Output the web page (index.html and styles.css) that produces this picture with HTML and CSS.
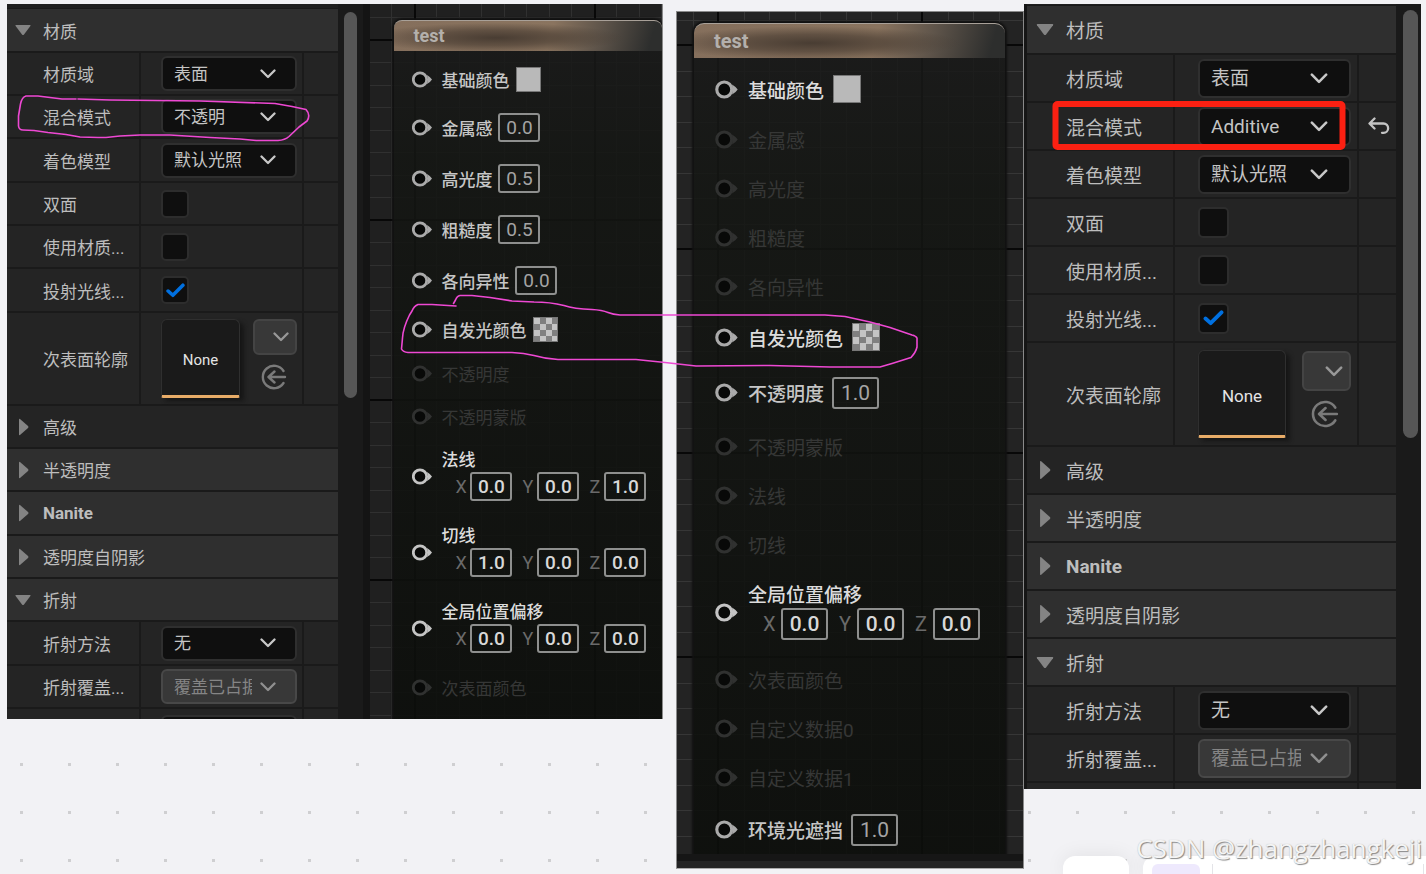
FILE: index.html
```html
<!DOCTYPE html>
<html lang="zh-CN">
<head>
<meta charset="utf-8">
<title>材质混合模式对比</title>
<link rel="stylesheet" href="styles.css">
</head>
<body>
<svg class="sprite" aria-hidden="true">
  <symbol id="down" viewBox="0 0 16 12"><path d="M1 1h14q1 0 .4 1L9 10.500q-1 1-2 0L.6 2Q0 1 1 1z" fill="#848484"/></symbol>
  <symbol id="right" viewBox="0 0 11 18"><path d="M1 1.500Q1 .5 2 1l8 7q1 1 0 2l-8 7q-1 .5-1-.5z" fill="#848484"/></symbol>
  <symbol id="chev" viewBox="0 0 16 10"><path d="M1.500 1.500 8 8l6.500-6.500" fill="none" stroke="currentColor" stroke-width="2.300" stroke-linecap="round" stroke-linejoin="round"/></symbol>
  <symbol id="tick" viewBox="0 0 18 14"><path d="M2 7.500 6.500 11.500 16 2" fill="none" stroke="#0070e0" stroke-width="3.400" stroke-linecap="round" stroke-linejoin="round"/></symbol>
  <symbol id="use" viewBox="0 0 26 26"><path d="M22.500 7a11.200 11.200 0 1 0 0 12M24 13H8M13.500 7.500 7.500 13l6 5.500" fill="none" stroke="#7a7a7a" stroke-width="2.400" stroke-linecap="round" stroke-linejoin="round"/></symbol>
  <symbol id="reset" viewBox="0 0 22 18"><path d="M6.500 1.500 1.500 6.500l5 5M2 6.500h13.500a4.600 4.600 0 0 1 0 9.300H14" fill="none" stroke="#c4c4c4" stroke-width="2.300" stroke-linecap="round" stroke-linejoin="round"/></symbol>
  <symbol id="pin" viewBox="0 0 20 17"><circle cx="8" cy="8.500" r="6.700" fill="#080908" stroke="currentColor" stroke-width="2.800"/><path d="M15 4q4 2.500 5 4.500-1 2-5 4.500 1.500-4.500 0-9z" fill="currentColor"/></symbol>
</svg>
<main class="board">
  <section class="shot shot-wide">
    <div class="details">
      <div class="rows">
        <button class="cat"><svg class="down"><use href="#down"/></svg>材质</button>
        <div class="row"><label for="a1">材质域</label><div class="val"><span class="combo"><select id="a1"><option>表面</option></select><svg><use href="#chev"/></svg></span></div><div></div></div>
        <div class="row"><label for="a2">混合模式</label><div class="val"><span class="combo"><select id="a2"><option>不透明</option></select><svg><use href="#chev"/></svg></span></div><div></div></div>
        <div class="row"><label for="a3">着色模型</label><div class="val"><span class="combo"><select id="a3"><option>默认光照</option></select><svg><use href="#chev"/></svg></span></div><div></div></div>
        <div class="row"><label for="a4">双面</label><div class="val"><span class="check"><input type="checkbox" id="a4"><svg><use href="#tick"/></svg></span></div><div></div></div>
        <div class="row"><label for="a5">使用材质...</label><div class="val"><span class="check"><input type="checkbox" id="a5"><svg><use href="#tick"/></svg></span></div><div></div></div>
        <div class="row"><label for="a6">投射光线...</label><div class="val"><span class="check"><input type="checkbox" id="a6" checked><svg><use href="#tick"/></svg></span></div><div></div></div>
        <div class="row"><label for="a7">次表面轮廓</label><div class="val asset"><button class="thumb" id="a7">None</button><div class="tools"><button class="pick" aria-label="选择资产"><svg><use href="#chev"/></svg></button><button class="apply" aria-label="使用所选资产"><svg><use href="#use"/></svg></button></div></div><div></div></div>
        <button class="cat sub"><svg class="right"><use href="#right"/></svg>高级</button>
        <button class="cat"><svg class="right"><use href="#right"/></svg>半透明度</button>
        <button class="cat strong"><svg class="right"><use href="#right"/></svg>Nanite</button>
        <button class="cat"><svg class="right"><use href="#right"/></svg>透明度自阴影</button>
        <button class="cat"><svg class="down"><use href="#down"/></svg>折射</button>
        <div class="row"><label for="a8">折射方法</label><div class="val"><span class="combo"><select id="a8"><option>无</option></select><svg><use href="#chev"/></svg></span></div><div></div></div>
        <div class="row"><label for="a9">折射覆盖...</label><div class="val"><span class="combo off"><select id="a9" disabled><option>覆盖已占据</option></select><svg><use href="#chev"/></svg></span></div><div></div></div>
        <div class="row peek"><div></div><div class="val"><span class="combo"><select aria-label="更多"><option></option></select></span></div><div></div></div>
      </div>
      <div class="scroll"><div class="bar"></div></div>
    </div>
    <div class="graph">
      <article class="node">
        <h2>test</h2>
        <div class="pins">
          <div class="p color"><svg><use href="#pin"/></svg><span>基础颜色</span><i class="swatch"></i></div>
          <div class="p value"><svg><use href="#pin"/></svg><label for="n1">金属感</label><input id="n1" value="0.0"></div>
          <div class="p value"><svg><use href="#pin"/></svg><label for="n2">高光度</label><input id="n2" value="0.5"></div>
          <div class="p value"><svg><use href="#pin"/></svg><label for="n3">粗糙度</label><input id="n3" value="0.5"></div>
          <div class="p value"><svg><use href="#pin"/></svg><label for="n4">各向异性</label><input id="n4" value="0.0"></div>
          <div class="p color"><svg><use href="#pin"/></svg><span>自发光颜色</span><i class="swatch alpha"></i></div>
          <div class="p dim"><svg><use href="#pin"/></svg><span>不透明度</span></div>
          <div class="p dim"><svg><use href="#pin"/></svg><span>不透明蒙版</span></div>
          <div class="p vec"><svg><use href="#pin"/></svg><div><span>法线</span><div class="xyz"><label>X<input value="0.0"></label><label>Y<input value="0.0"></label><label>Z<input value="1.0"></label></div></div></div>
          <div class="p vec"><svg><use href="#pin"/></svg><div><span>切线</span><div class="xyz"><label>X<input value="1.0"></label><label>Y<input value="0.0"></label><label>Z<input value="0.0"></label></div></div></div>
          <div class="p vec"><svg><use href="#pin"/></svg><div><span>全局位置偏移</span><div class="xyz"><label>X<input value="0.0"></label><label>Y<input value="0.0"></label><label>Z<input value="0.0"></label></div></div></div>
          <div class="p dim"><svg><use href="#pin"/></svg><span>次表面颜色</span></div>
        </div>
      </article>
    </div>
  </section>

  <section class="shot shot-graph large">
    <div class="graph">
      <article class="node">
        <h2>test</h2>
        <div class="pins">
          <div class="p color"><svg><use href="#pin"/></svg><span>基础颜色</span><i class="swatch"></i></div>
          <div class="p dim"><svg><use href="#pin"/></svg><span>金属感</span></div>
          <div class="p dim"><svg><use href="#pin"/></svg><span>高光度</span></div>
          <div class="p dim"><svg><use href="#pin"/></svg><span>粗糙度</span></div>
          <div class="p dim"><svg><use href="#pin"/></svg><span>各向异性</span></div>
          <div class="p color"><svg><use href="#pin"/></svg><span>自发光颜色</span><i class="swatch alpha"></i></div>
          <div class="p value"><svg><use href="#pin"/></svg><label for="m1">不透明度</label><input id="m1" value="1.0"></div>
          <div class="p dim"><svg><use href="#pin"/></svg><span>不透明蒙版</span></div>
          <div class="p dim"><svg><use href="#pin"/></svg><span>法线</span></div>
          <div class="p dim"><svg><use href="#pin"/></svg><span>切线</span></div>
          <div class="p vec"><svg><use href="#pin"/></svg><div><span>全局位置偏移</span><div class="xyz"><label>X<input value="0.0"></label><label>Y<input value="0.0"></label><label>Z<input value="0.0"></label></div></div></div>
          <div class="p dim"><svg><use href="#pin"/></svg><span>次表面颜色</span></div>
          <div class="p dim"><svg><use href="#pin"/></svg><span>自定义数据0</span></div>
          <div class="p dim"><svg><use href="#pin"/></svg><span>自定义数据1</span></div>
          <div class="p value last"><svg><use href="#pin"/></svg><label for="m2">环境光遮挡</label><input id="m2" value="1.0"></div>
        </div>
      </article>
    </div>
    <div class="dock"></div>
  </section>

  <section class="shot shot-details large">
    <div class="details">
      <div class="rows">
        <button class="cat"><svg class="down"><use href="#down"/></svg>材质</button>
        <div class="row"><label for="b1">材质域</label><div class="val"><span class="combo"><select id="b1"><option>表面</option></select><svg><use href="#chev"/></svg></span></div><div></div></div>
        <div class="row"><label for="b2">混合模式</label><div class="val"><span class="combo"><select id="b2"><option>Additive</option></select><svg><use href="#chev"/></svg></span></div><div class="end"><button class="reset" aria-label="重置为默认值"><svg><use href="#reset"/></svg></button></div></div>
        <div class="row"><label for="b3">着色模型</label><div class="val"><span class="combo"><select id="b3"><option>默认光照</option></select><svg><use href="#chev"/></svg></span></div><div></div></div>
        <div class="row"><label for="b4">双面</label><div class="val"><span class="check"><input type="checkbox" id="b4"><svg><use href="#tick"/></svg></span></div><div></div></div>
        <div class="row"><label for="b5">使用材质...</label><div class="val"><span class="check"><input type="checkbox" id="b5"><svg><use href="#tick"/></svg></span></div><div></div></div>
        <div class="row"><label for="b6">投射光线...</label><div class="val"><span class="check"><input type="checkbox" id="b6" checked><svg><use href="#tick"/></svg></span></div><div></div></div>
        <div class="row"><label for="b7">次表面轮廓</label><div class="val asset"><button class="thumb" id="b7">None</button><div class="tools"><button class="pick" aria-label="选择资产"><svg><use href="#chev"/></svg></button><button class="apply" aria-label="使用所选资产"><svg><use href="#use"/></svg></button></div></div><div></div></div>
        <button class="cat sub"><svg class="right"><use href="#right"/></svg>高级</button>
        <button class="cat"><svg class="right"><use href="#right"/></svg>半透明度</button>
        <button class="cat strong"><svg class="right"><use href="#right"/></svg>Nanite</button>
        <button class="cat"><svg class="right"><use href="#right"/></svg>透明度自阴影</button>
        <button class="cat"><svg class="down"><use href="#down"/></svg>折射</button>
        <div class="row"><label for="b8">折射方法</label><div class="val"><span class="combo"><select id="b8"><option>无</option></select><svg><use href="#chev"/></svg></span></div><div></div></div>
        <div class="row"><label for="b9">折射覆盖...</label><div class="val"><span class="combo off"><select id="b9" disabled><option>覆盖已占据</option></select><svg><use href="#chev"/></svg></span></div><div></div></div>
        <div class="row peek"><div></div><div></div><div></div></div>
      </div>
      <div class="scroll"><div class="bar"></div></div>
    </div>
  </section>

  <svg class="ink" viewBox="0 0 1426 874" preserveAspectRatio="none" aria-hidden="true">
    <g fill="none" stroke="#ee48d3" stroke-width="1.600" stroke-linejoin="round" stroke-linecap="round">
      <path d="M76 99H62L50 97.500 38 96H26Q22 97 20.500 104L18.500 116V126Q19 130 23 130L34 130.500 48 132.500 66 134.500 80 137 98 137.500H106L120 136 140 135H170L210 137.500 240 139 256 140.500H278Q285 140 289 136.500L299 127 307 121Q311 115 306 109.500L292 106.500 275 103.500 200 101 110 100 78 99"/>
      <path d="M456 306 432 304.500H418Q414 306 412 311L409.500 315Q403 328 402.500 338L401.500 349Q403 352 408 352.500H512Q524 353 534 355.500 546 359 558 359.500H636L665 362.500 696 366 770 365.500 830 367H880L892 363.500 911 357.500Q916 352 917 347V338Q916 336 912 335L890 327.500 870 322 845 316.500 825 315H620Q613 314.500 608 312.500 602 310 592 309.500 574 309 564 305.500 550 302 534 302L512 301 490 297.500 472 295.500H460Q457 296 455.500 300L453.500 303.500"/>
    </g>
    <rect x="1055.500" y="104" width="287" height="43" rx="2" fill="none" stroke="#fb2012" stroke-width="6"/>
  </svg>
</main>
<div class="toolbars"><div class="card small"></div><div class="card wide"><div class="chip"></div><div class="sep"></div></div></div>
<div class="mark">CSDN @zhangzhangkeji</div>
</body>
</html>
```
FILE: styles.css
```css
* { box-sizing: border-box; }
body {
  margin: 0;
  min-height: 100vh;
  position: relative;
  overflow: hidden;
  background: conic-gradient(from 270deg at 3px 3px, #cfcfd1 90deg, transparent 0) 20px 43px / 48px 48px #f2f2f5;
  font-family: Roboto, "Noto Sans CJK SC", sans-serif;
  color: #bdbdbd;
}
button, select, input { font: inherit; color: inherit; margin: 0; padding: 0; border: 0; background: none; }
svg { display: block; }
.sprite { display: none; }

.board {
  position: relative;
  display: grid;
  grid-template-columns: 656fr 361fr 397fr;
  align-items: start;
  min-height: 100vh;
  padding: 4px 5px 0 7px;
}
.shot {
  --fs: 17px;
  --indent: 36px;
  --name: 134px;
  --tail: 36px;
  --pad: 20px;
  --combo: 35px;
  --box: 28px;
  --thumb: 79px;
  min-width: 0;
  font-size: var(--fs);
  background: #1a1a1a;
}
.large {
  --fs: 19px;
  --indent: 39px;
  --name: 148px;
  --tail: 39px;
  --pad: 23px;
  --combo: 39px;
  --box: 31px;
  --thumb: 88px;
}
.shot-wide { display: grid; grid-template-columns: 364fr 292fr; border-right: 1px solid #8a8a8a; }
.shot-graph { margin: 7px 0 0 13px; border: 1px solid #8a8a8a; border-bottom-color: #aaa; }
.shot-details { border-left: 3px solid #161616; }

/* Details panel */
.details { display: grid; grid-template-columns: 1fr 32px; }
.shot-details .details { grid-template-columns: 1fr 25px; }
.rows {
  display: grid;
  padding-top: 4px;
  background: #1f1f1f;
  grid-template-rows: 44px repeat(2, 43px 43px 44px) 93px repeat(2, 43px 43px 44px) 43px 11px;
}
.large .rows { padding-top: 1px; grid-template-rows: 49px repeat(6, 48px) 104px repeat(7, 48px) 7px; }
.scroll { background: linear-gradient(90deg, #1a1a1a 25px, #141414 25px); padding: 8px 13px 0 6px; }
.bar { width: 13px; height: 386px; border-radius: 7px; background: #565656; }
.large .scroll { background: #1a1a1a; padding: 6px 0 0 7px; }
.large .bar { width: 15px; height: 428px; border-radius: 8px; }

.cat {
  display: flex;
  align-items: center;
  text-align: left;
  background: #2f2f2f;
  border: solid #1a1a1a;
  border-width: 1px 0;
}
.cat svg { flex: none; }
.cat.sub { background: #242424; }
.cat.strong { font-weight: 700; }
.down { width: 16px; height: 12px; margin: 0 12px 0 8px; }
.right { width: 11px; height: 18px; margin: 0 14px 0 11px; }
.large .down { width: 18px; height: 13px; margin: 0 12px 0 9px; }
.large .right { width: 12px; height: 20px; margin: 0 15px 0 12px; }

.row { display: grid; grid-template-columns: var(--name) 1fr var(--tail); min-height: 0; overflow: hidden; }
.row > * {
  display: flex;
  align-items: center;
  min-width: 0;
  background: #242424;
  border: solid #1a1a1a;
  border-width: 1px 0;
}
.row > :first-child { padding-left: var(--indent); border-right-width: 2px; white-space: nowrap; }
.row > :last-child { border-left-width: 2px; }
.row.peek > * { align-items: flex-start; padding-top: 6px; border-bottom: 0; }
.val { padding: 0 5px 0 var(--pad); }
.large .val { padding-right: 6px; }

.combo { display: grid; width: 100%; align-items: center; }
.combo > * { grid-area: 1 / 1; }
.combo select {
  appearance: none;
  width: 100%;
  height: var(--combo);
  padding: 0 40px 0 11px;
  border: 2px solid #2f2f2f;
  border-radius: 6px;
  background: #0f0f0f;
  color: #c4c4c4;
}
.combo svg { justify-self: end; width: 16px; height: 10px; margin-right: 21px; color: #c8c8c8; pointer-events: none; }
.combo.off select { background: #383838; border-color: #484848; color: #858585; opacity: 1; padding-right: 43px; }
.combo.off svg { color: #909090; }
.large .combo select { padding: 0 44px 0 11px; }
.large .combo svg { width: 18px; height: 11px; margin-right: 23px; }
.large .combo.off select { padding-right: 48px; }

.check { display: grid; place-items: center; }
.check > * { grid-area: 1 / 1; }
.check input {
  appearance: none;
  width: var(--box);
  height: var(--box);
  border: 2px solid #2d2d2d;
  border-radius: 5px;
  background: #0f0f0f;
}
.check svg { width: 19px; height: 15px; visibility: hidden; pointer-events: none; }
.check input:checked + svg { visibility: visible; }
.large .check svg { width: 21px; height: 16px; }

.asset { justify-content: space-between; }
.thumb {
  width: var(--thumb);
  height: var(--thumb);
  padding-top: 5px;
  border: 1px solid #2f2f2f;
  border-bottom: 3px solid #e8ac68;
  border-radius: 6px 6px 2px 2px;
  background: #1a1a1a;
  color: #e4e4e4;
  font-size: 15px;
  box-shadow: 4px 3px 4px #161616;
}
.large .thumb { font-size: 17px; }
.tools { display: flex; flex-direction: column; gap: 9px; margin-bottom: 9px; }
.pick {
  display: flex;
  align-items: center;
  justify-content: flex-end;
  width: 44px;
  height: 36px;
  padding-right: 6px;
  border: 2px solid #444;
  border-radius: 6px;
  background: #383838;
  color: #989898;
}
.pick svg { width: 16px; height: 10px; }
.apply { width: 26px; height: 26px; margin-left: 8px; }
.apply svg { width: 26px; height: 26px; }
.large .pick { width: 49px; height: 40px; }
.large .pick svg { width: 18px; height: 11px; }
.large .apply, .large .apply svg { width: 28px; height: 28px; }
.large .apply { margin-left: 9px; }
.row > .end { justify-content: flex-end; padding-right: 6px; }
.reset svg { width: 22px; height: 18px; }

/* Material graph */
.graph {
  min-width: 0;
  overflow: hidden;
  background:
    linear-gradient(#080808 2px, transparent 2px) 0 35px / 180px 180px,
    linear-gradient(90deg, #080808 2px, transparent 2px) 44px 0 / 180px 180px,
    linear-gradient(#303030 1px, transparent 1px 22px, #303030 22px 23px, transparent 23px) 0 36px / 45px 45px,
    linear-gradient(90deg, #303030 1px, transparent 1px 22px, #303030 22px 23px, transparent 23px) 44px 0 / 45px 45px,
    #202020;
}
.large .graph {
  max-height: 842px;
  background:
    linear-gradient(#080808 2px, transparent 2px) 0 32px / 204px 204px,
    linear-gradient(90deg, #080808 2px, transparent 2px) 40px 0 / 204px 204px,
    linear-gradient(#363636 1px, transparent 1px 26px, #363636 26px 27px, transparent 27px) 0 33px / 51px 51px,
    linear-gradient(90deg, #363636 1px, transparent 1px 26px, #363636 26px 27px, transparent 27px) 41px 0 / 51px 51px,
    #232323;
}
.dock { height: 14px; background: linear-gradient(#161616 7px, #242424 7px); }
.node {
  height: 100%;
  margin: 16px 0 0 24px;
  border-radius: 8px 8px 0 0;
  background: linear-gradient(rgba(26, 26, 26, .84), rgba(20, 22, 19, .86) 20%, rgba(12, 14, 11, .88));
  box-shadow: 0 0 2px 2px #111;
}
.large .node { margin: 11px 18px 0 17px; border-radius: 10px 10px 0 0; }
.node h2 {
  margin: 0;
  height: 31px;
  padding-left: 19px;
  font-size: 18px;
  line-height: 30px;
  font-weight: 700;
  color: #b4b0ac;
  border-top: 1px solid #a8a098;
  border-radius: 8px 8px 0 0;
  background:
    radial-gradient(ellipse 48% 50% at 38% 56%, rgba(66, 55, 46, .9), rgba(70, 58, 48, .6) 50%, transparent),
    linear-gradient(105deg, #856f5c, #8a745f 58%, #5e544a 76%, #2d2e2d 95%);
}
.large .node h2 { height: 35px; font-size: 20px; line-height: 34px; padding-left: 20px; border-radius: 10px 10px 0 0; }
.pins { padding-top: 5px; }
.p { display: flex; align-items: center; padding-left: 18px; color: #c6c6c6; white-space: nowrap; font-weight: 500; }
.p > svg { flex: none; width: 20px; height: 17px; margin-right: 9px; color: #aaa; }
.p.color { height: 46px; }
.p.value { height: 51px; }
.p.dim { height: 43px; color: #363736; font-weight: 400; }
.p.dim > svg { color: #303130; }
.p.vec { height: 76px; color: #dcdcdc; }
.vec > svg { color: #c4c4c4; }
.vec > div { padding-bottom: 3px; }
.vec span { display: block; line-height: 24px; }
.large .p { padding-left: 21px; }
.large .p > svg { width: 23px; height: 19px; margin-right: 10px; }
.large .p.color { height: 52px; color: #dcdcdc; }
.large .p.value { height: 59px; }
.large .p.last { height: 55px; }
.large .p.dim { height: 49px; }
.large .p.vec { height: 86px; }
.large .vec > div { padding-bottom: 0; }

.swatch { width: 25px; height: 25px; margin-left: 7px; background: #b9b9b9; border: 1px solid #777; }
.swatch.alpha { background: conic-gradient(#808080 25%, #c4c4c4 0 50%, #808080 0 75%, #c4c4c4 0) 0 0 / 12px 12px; }
.large .swatch { width: 28px; height: 28px; margin-left: 9px; }
.large .swatch.alpha { background-size: 13px 13px; }
.p input {
  width: 42px;
  height: 29px;
  border: 2px solid #8e8f8e;
  border-radius: 3px;
  text-align: center;
  font-size: 19px;
  font-weight: 400;
  color: #a4a4a4;
}
.value input { margin-left: 6px; }
.p.vec input { color: #d8d8d8; font-weight: 500; }
.xyz { display: flex; gap: 10px; padding-left: 14px; }
.xyz label { display: grid; grid-template-columns: 15px auto; align-items: center; font-size: 18px; font-weight: 400; line-height: 29px; color: #6a6a6a; }
.large .p input { width: 47px; height: 32px; font-size: 21px; }
.large .value input { margin-left: 8px; }
.large .xyz { gap: 11px; padding-left: 15px; }
.large .xyz label { grid-template-columns: 18px auto; font-size: 20px; }

/* Hand-drawn marks over the captures */
.ink { position: absolute; inset: 0; width: 100%; height: 100%; pointer-events: none; }

.toolbars { position: absolute; right: 0; bottom: 0; display: flex; gap: 14px; width: 363px; height: 18px; }
.card { background: #fff; border-radius: 12px 12px 0 0; box-shadow: 0 0 20px rgba(0, 0, 0, .08); }
.small { width: 66px; }
.wide { flex: 1; display: flex; gap: 12px; padding: 8px 2px 0 9px; border-top-right-radius: 0; }
.chip { width: 48px; border-radius: 6px 6px 0 0; background: #eee9fd; }
.sep { flex: 1; border: solid #e4e4e8; border-width: 0 1px; }
.mark {
  position: absolute;
  right: 4px;
  bottom: 8px;
  font: 26px/36px "Open Sans", sans-serif;
  color: #f4f4f4;
  text-shadow: 1px 1px 1px #888, 0 0 1px #bbb;
}
```
